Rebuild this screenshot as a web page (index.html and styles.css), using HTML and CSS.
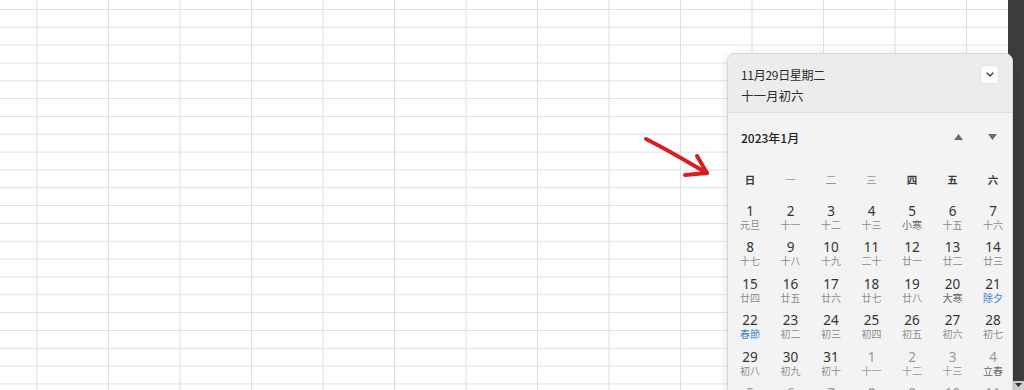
FILE: index.html
```html
<!DOCTYPE html>
<html lang="zh">
<head>
<meta charset="utf-8">
<link rel="stylesheet" href="styles.css">
</head>
<body>
<div class="screen">
  <div class="sheet"></div>
  <div class="scrollbar">
    <div class="scroll-btn"><svg width="7" height="5" viewBox="0 0 7 5"><path d="M0 0h7L3.5 4z" fill="#333"/></svg></div>
  </div>

  <svg class="arrow" width="80" height="50" viewBox="0 0 80 50">
    <path d="M5 6 C 25 16, 45 28, 66 40" fill="none" stroke="#d81e1e" stroke-width="4" stroke-linecap="round"/>
    <path d="M56 23 L 66 40 L 44 42" fill="none" stroke="#d81e1e" stroke-width="4" stroke-linecap="round" stroke-linejoin="round"/>
  </svg>

  <div class="calendar">
    <div class="cal-head">
      <div class="head-text">
        <div class="date-line">11月29日星期二</div>
        <div class="lunar-line">十一月初六</div>
      </div>
      <div class="collapse-btn">
        <svg width="8" height="5" viewBox="0 0 8 5"><path d="M1 1l3 3 3-3" fill="none" stroke="#333" stroke-width="1.2" stroke-linecap="round" stroke-linejoin="round"/></svg>
      </div>
    </div>
    <div class="cal-body">
      <div class="month-row">
        <span class="month-title">2023年1月</span>
        <div class="nav">
          <svg width="9" height="6" viewBox="0 0 9 6"><path d="M4.5 0L9 6H0z" fill="#6b6b6b"/></svg>
          <svg width="9" height="6" viewBox="0 0 9 6"><path d="M0 0h9L4.5 6z" fill="#6b6b6b"/></svg>
        </div>
      </div>
      <div class="grid weekdays">
        <span>日</span><span class="thin">一</span><span class="thin">二</span><span class="thin">三</span><span>四</span><span>五</span><span>六</span>
      </div>
      <div class="grid days">
        <div class="day"><b>1</b><i>元旦</i></div>
        <div class="day"><b>2</b><i>十一</i></div>
        <div class="day"><b>3</b><i>十二</i></div>
        <div class="day"><b>4</b><i>十三</i></div>
        <div class="day"><b>5</b><i class="term">小寒</i></div>
        <div class="day"><b>6</b><i>十五</i></div>
        <div class="day"><b>7</b><i>十六</i></div>

        <div class="day"><b>8</b><i>十七</i></div>
        <div class="day"><b>9</b><i>十八</i></div>
        <div class="day"><b>10</b><i>十九</i></div>
        <div class="day"><b>11</b><i>二十</i></div>
        <div class="day"><b>12</b><i>廿一</i></div>
        <div class="day"><b>13</b><i>廿二</i></div>
        <div class="day"><b>14</b><i>廿三</i></div>

        <div class="day"><b>15</b><i>廿四</i></div>
        <div class="day"><b>16</b><i>廿五</i></div>
        <div class="day"><b>17</b><i>廿六</i></div>
        <div class="day"><b>18</b><i>廿七</i></div>
        <div class="day"><b>19</b><i>廿八</i></div>
        <div class="day"><b>20</b><i class="term">大寒</i></div>
        <div class="day"><b>21</b><i class="fest">除夕</i></div>

        <div class="day"><b>22</b><i class="fest">春節</i></div>
        <div class="day"><b>23</b><i>初二</i></div>
        <div class="day"><b>24</b><i>初三</i></div>
        <div class="day"><b>25</b><i>初四</i></div>
        <div class="day"><b>26</b><i>初五</i></div>
        <div class="day"><b>27</b><i>初六</i></div>
        <div class="day"><b>28</b><i>初七</i></div>

        <div class="day"><b>29</b><i>初八</i></div>
        <div class="day"><b>30</b><i>初九</i></div>
        <div class="day"><b>31</b><i>初十</i></div>
        <div class="day other"><b>1</b><i>十一</i></div>
        <div class="day other"><b>2</b><i>十二</i></div>
        <div class="day other"><b>3</b><i>十三</i></div>
        <div class="day other"><b>4</b><i class="term">立春</i></div>

        <div class="day other"><b>5</b><i>十五</i></div>
        <div class="day other"><b>6</b><i>十六</i></div>
        <div class="day other"><b>7</b><i>十七</i></div>
        <div class="day other"><b>8</b><i>十八</i></div>
        <div class="day other"><b>9</b><i>十九</i></div>
        <div class="day other"><b>10</b><i>二十</i></div>
        <div class="day other"><b>11</b><i>廿一</i></div>
      </div>
    </div>
  </div>
</div>
</body>
</html>
```

FILE: styles.css
```css
* { box-sizing: border-box; }

html, body {
  margin: 0;
  padding: 0;
  background: #ffffff;
}

body {
  width: 1024px;
  height: 390px;
  overflow: hidden;
  font-family: "Noto Sans CJK SC", "Noto Sans", sans-serif;
}

.screen {
  position: relative;
  display: flex;
  width: 1024px;
  height: 390px;
  overflow: hidden;
}

.sheet {
  flex: 0 0 1008px;
  height: 390px;
  background-color: #ffffff;
  background-image:
    linear-gradient(to right, #dedede 1px, transparent 1px),
    linear-gradient(to bottom, #e1e1e1 1px, transparent 1px);
  background-size: 71.5px 17.83px;
  background-position: 36.5px 9px;
}

.scrollbar {
  flex: 1 1 auto;
  height: 390px;
  background: #3c3c3c;
  display: flex;
  flex-direction: column;
  justify-content: flex-end;
  align-items: flex-end;
}

.scroll-btn {
  width: 11px;
  height: 9px;
  background: #cfcfcf;
  display: flex;
  align-items: center;
  justify-content: center;
}

.arrow {
  position: absolute;
  left: 641px;
  top: 133px;
}

.calendar {
  position: absolute;
  left: 727px;
  top: 53px;
  width: 286px;
  height: 360px;
  border: 1px solid #d6d6d6;
  border-radius: 8px;
  overflow: hidden;
  background: #f3f3f3;
  box-shadow: 0 2px 10px rgba(0, 0, 0, 0.12);
  color: #2b2b2b;
}

.cal-head {
  height: 59px;
  background: #ececec;
  border-bottom: 1px solid #e0e0e0;
  display: flex;
  justify-content: space-between;
  padding: 10px 13px 0 13px;
}

.date-line {
  font-size: 12px;
  line-height: 22px;
  color: #2b2b2b;
  letter-spacing: -0.3px;
}

.lunar-line {
  font-size: 12.5px;
  line-height: 20px;
  color: #2b2b2b;
}

.collapse-btn {
  width: 19px;
  height: 19px;
  margin-top: 1px;
  background: #fbfbfb;
  border-radius: 4px;
  border: 1px solid #e6e6e6;
  display: flex;
  align-items: center;
  justify-content: center;
}

.cal-body {
  padding: 0 0 0 1.75px;
}

.month-row {
  height: 48px;
  display: flex;
  align-items: center;
  justify-content: space-between;
  padding: 0 15px 0 11.25px;
}

.month-title {
  font-size: 12px;
  font-weight: 500;
  color: #222;
}

.nav {
  display: flex;
  gap: 25px;
}

.grid {
  display: grid;
  grid-template-columns: repeat(7, 40.5px);
}

.weekdays {
  height: 37px;
  align-items: center;
}

.weekdays span {
  text-align: center;
  font-size: 10.5px;
  font-weight: 700;
  color: #3a3a3a;
}

.weekdays span.thin {
  font-weight: 400;
  color: #959595;
}

.days {
  grid-auto-rows: 36.4px;
}

.day {
  display: flex;
  flex-direction: column;
  align-items: center;
  padding-top: 6px;
}

.day b {
  font-family: "Noto Sans", "Noto Sans CJK SC", sans-serif;
  font-weight: 400;
  font-size: 13.5px;
  line-height: 15px;
  color: #333;
}

.day i {
  font-style: normal;
  font-size: 10px;
  line-height: 11px;
  color: #8c8c8c;
}

.day i.term {
  color: #666;
}

.day i.fest {
  color: #3d82c4;
}

.day.other b {
  color: #9a9a9a;
}

.day.other i {
  color: #9a9a9a;
}

.day.other i.term {
  color: #666;
}
```
